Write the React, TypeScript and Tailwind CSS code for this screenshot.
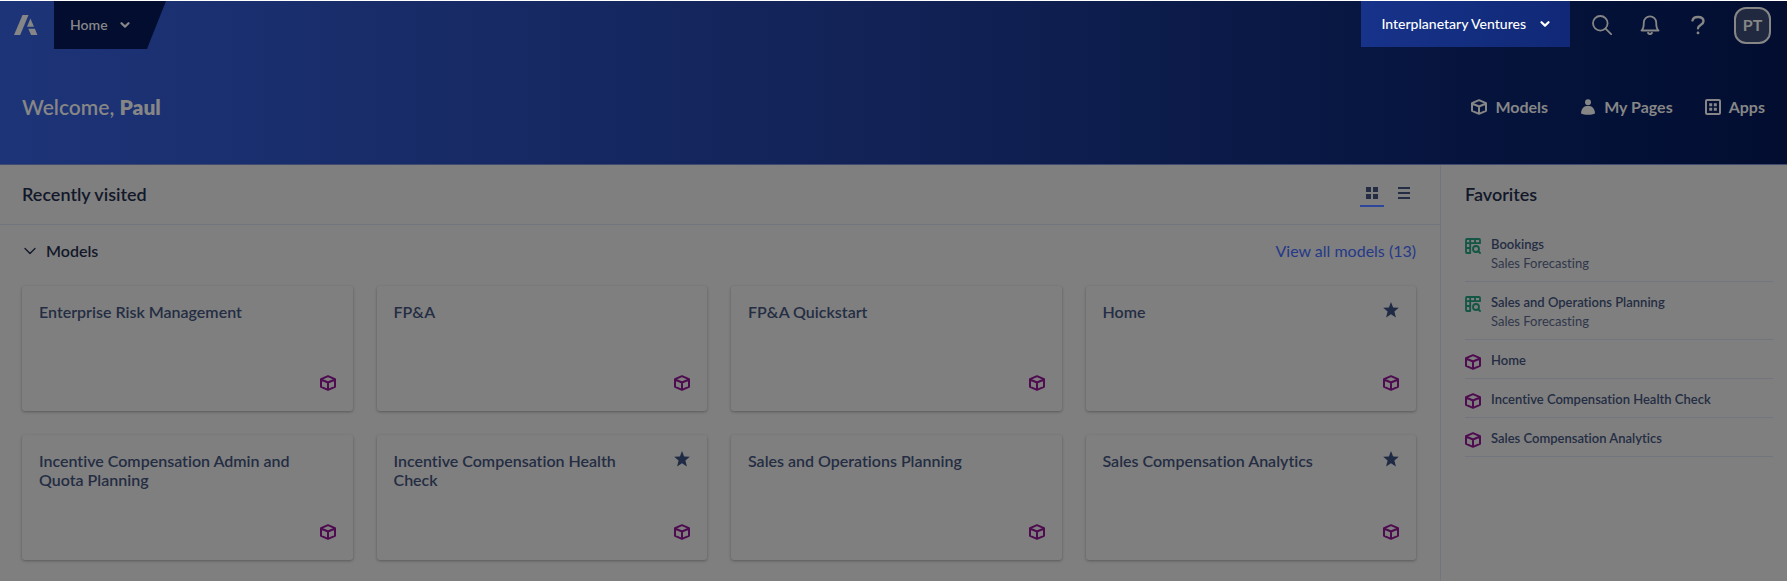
import type { ReactNode } from "react";

type IconProps = { className?: string };

const models = [
  { name: "Enterprise Risk Management", starred: false },
  { name: "FP&A", starred: false },
  { name: "FP&A Quickstart", starred: false },
  { name: "Home", starred: true },
  { name: "Incentive Compensation Admin and Quota Planning", starred: false },
  { name: "Incentive Compensation Health Check", starred: true },
  { name: "Sales and Operations Planning", starred: false },
  { name: "Sales Compensation Analytics", starred: true },
];

const favorites = [
  { name: "Bookings", app: "Sales Forecasting" },
  { name: "Sales and Operations Planning", app: "Sales Forecasting" },
  { name: "Home" },
  { name: "Incentive Compensation Health Check" },
  { name: "Sales Compensation Analytics" },
];

function Logo() {
  return (
    <svg className="w-6 h-5" viewBox="0 0 24 20" fill="currentColor" aria-hidden="true">
      <path d="M8.500 0h6L6.200 20H0z" />
      <path d="M16.400 3.500 20 11.800h-7z" />
      <path d="M14.300 13.700h6.600L23.400 20h-6.300z" />
    </svg>
  );
}

function Chevron({ className }: IconProps) {
  return (
    <svg className={className} viewBox="0 0 10 6" fill="none" stroke="currentColor" strokeWidth="2.200" strokeLinecap="round" strokeLinejoin="round" aria-hidden="true">
      <path d="M1.500 1.200 5 4.600l3.500-3.400" />
    </svg>
  );
}

function Cube({ className }: IconProps) {
  return (
    <svg className={className} viewBox="0 0 16 16" fill="none" stroke="currentColor" strokeWidth="2" strokeLinejoin="round" aria-hidden="true">
      <path d="M8 1.200 15 4.200v7.600l-7 3-7-3V4.200zM1 4.500l7 3 7-3M8 7.500V15" />
    </svg>
  );
}

function PageIcon({ className }: IconProps) {
  return (
    <svg className={className} viewBox="0 0 16 16" fill="none" stroke="currentColor" strokeWidth="1.800" strokeLinecap="round" strokeLinejoin="round" aria-hidden="true">
      <path d="M15 5.200V2a1 1 0 0 0-1-1H2a1 1 0 0 0-1 1v12a1 1 0 0 0 1 1h3.200V1M1 5.200h14M10 1v4.200M1 10h4.200" />
      <circle cx="11" cy="11" r="3" />
      <path d="m13.200 13.200 1.800 1.800" />
    </svg>
  );
}

function Star({ className }: IconProps) {
  return (
    <svg className={className} viewBox="0 0 16 16" fill="currentColor" aria-hidden="true">
      <path d="m8 0 2.100 5.500 5.700.3-4.400 3.700 1.500 5.900L8 12.200l-4.900 3.200 1.500-5.900L.2 5.800l5.700-.3z" />
    </svg>
  );
}

function NavLink({ icon, children }: { icon: ReactNode; children: ReactNode }) {
  return (
    <a href="#" className="flex items-center gap-2">
      {icon}
      {children}
    </a>
  );
}

function TopBar() {
  return (
    <div className="flex h-12">
      <a href="#" aria-label="Start page" className="flex w-[54px] items-center justify-center pr-0.5">
        <Logo />
      </a>
      <button className="flex w-28 items-center gap-3 bg-[#020d30] pl-4 text-sm font-semibold [clip-path:polygon(0_0,100%_0,83%_100%,0_100%)]">
        Home
        <Chevron className="w-2.5 h-1.5" />
      </button>

      <div className="ml-auto flex items-center pr-4">
        <button className="mr-[22px] flex h-[46px] items-center gap-3.5 self-start bg-gradient-to-r from-[#17338a] to-[#102876] px-5 text-sm font-medium text-white">
          Interplanetary Ventures
          <Chevron className="w-2.5 h-1.5" />
        </button>
        <div className="mr-[26px] flex items-center gap-7">
          <button aria-label="Search">
            <svg className="size-5" viewBox="0 0 20 20" fill="none" stroke="currentColor" strokeWidth="1.800" strokeLinecap="round">
              <circle cx="8.300" cy="8.300" r="7.300" />
              <path d="m13.800 13.800 5.500 5.500" />
            </svg>
          </button>
          <button aria-label="Notifications">
            <svg className="size-5" viewBox="0 0 20 20" fill="none" stroke="currentColor" strokeWidth="1.800" strokeLinecap="round" strokeLinejoin="round">
              <path d="M1.500 15.500h17c-2-1.500-2.300-3.500-2.300-8A6.200 6.200 0 0 0 3.800 7.500c0 4.500-.3 6.500-2.300 8z" />
              <path d="M8.200 18c.8 1.300 2.800 1.300 3.600 0" strokeWidth="2.200" />
            </svg>
          </button>
          <button aria-label="Help">
            <svg className="size-5" viewBox="0 0 20 20" fill="none" stroke="currentColor" strokeWidth="2.400" strokeLinecap="round" strokeLinejoin="round">
              <path d="M4.500 5.400C5 3.200 7.200 2 10 2c3.300 0 5.500 1.700 5.500 4.300 0 3.900-5.500 3.500-5.500 7" />
              <path d="M10 17.800v.1" strokeWidth="2.800" />
            </svg>
          </button>
        </div>
        <button className="size-[37px] rounded-xl border-2 border-current bg-[#202940] text-base font-bold">PT</button>
      </div>
    </div>
  );
}

function ModelCard({ name, starred }: { name: string; starred: boolean }) {
  return (
    <a href="#" className="flex h-[125px] flex-col justify-between rounded-[3px] px-[17px] pt-4 pb-5 shadow-[0_1px_3px_rgba(0,0,0,0.3)]">
      <div className="flex items-start justify-between gap-8">
        <h3 className="max-w-[270px] text-base/[19px] font-semibold text-[#242d43]">{name}</h3>
        {starred && <Star className="size-4 shrink-0 text-[#1f2a44]" />}
      </div>
      <Cube className="size-4 self-end text-[#4f0b4f]" />
    </a>
  );
}

export default function App() {
  return (
    <div className="flex min-h-screen flex-col bg-[#7f7f7f] font-['Lato',sans-serif] [font-variant-ligatures:none]">
      <header className="border-t border-b border-t-white border-b-[#3f4a6e] bg-gradient-to-r from-[#1d3478] via-[#122256] to-[#020d30] text-[#868686]">
        <TopBar />
        <div className="flex h-[115px] items-center justify-between px-[22px]">
          <h1 className="text-[21px] font-semibold">
            Welcome, <strong className="font-extrabold">Paul</strong>
          </h1>
          <nav className="flex gap-8 text-base font-bold">
            <NavLink icon={<Cube className="size-4" />}>Models</NavLink>
            <NavLink
              icon={
                <svg className="size-4" viewBox="0 0 16 16" fill="currentColor" aria-hidden="true">
                  <circle cx="8" cy="3.200" r="3" />
                  <path d="M1 14.500C1 10 4 7 6.300 7h3.400C12 7 15 10 15 14.500 12 16.300 4 16.300 1 14.500z" />
                </svg>
              }
            >
              My Pages
            </NavLink>
            <NavLink
              icon={
                <svg className="size-4" viewBox="0 0 16 16" fill="currentColor" aria-hidden="true">
                  <rect x="1" y="1" width="14" height="14" rx="1" fill="none" stroke="currentColor" strokeWidth="2" />
                  <path d="M4.200 4.200h3v3h-3zM8.800 4.200h3v3h-3zM4.200 8.800h3v3h-3zM8.800 8.800h3v3h-3z" />
                </svg>
              }
            >
              Apps
            </NavLink>
          </nav>
        </div>
      </header>

      <div className="flex grow">
        <main className="flex-1">
          <div className="flex h-[60px] items-center justify-between border-b border-[#72747e] pr-[30px] pl-[22px]">
            <h2 className="pb-0.5 text-lg font-semibold text-[#121829]">Recently visited</h2>
            <div className="flex text-[#242d43]">
              <button aria-label="Grid view" className="flex h-6 w-6 justify-center border-b-2 border-[#2c469c] pt-1">
                <svg className="size-3" viewBox="0 0 12 12" fill="currentColor">
                  <path d="M0 0h5v5H0zM7 0h5v5H7zM0 7h5v5H0zM7 7h5v5H7z" />
                </svg>
              </button>
              <button aria-label="List view" className="ml-3.5 flex pt-1">
                <svg className="size-3" viewBox="0 0 12 12" fill="currentColor">
                  <path d="M0 0h12v2H0zM0 5h12v2H0zM0 10h12v2H0z" />
                </svg>
              </button>
            </div>
          </div>

          <section className="pr-6 pl-[22px] pt-4">
            <div className="flex items-center justify-between text-base/5">
              <button className="flex items-center gap-2 font-semibold text-[#121829]">
                <svg className="size-4" viewBox="0 0 16 16" fill="none" stroke="currentColor" strokeWidth="1.300" strokeLinecap="round" strokeLinejoin="round" aria-hidden="true">
                  <path d="m3 5.500 5 5 5-5" />
                </svg>
                Models
              </button>
              <a href="#" className="text-[#25398a]">View all models (13)</a>
            </div>
            <div className="mt-[25px] grid grid-cols-4 gap-6">
              {models.map((model) => (
                <ModelCard key={model.name} {...model} />
              ))}
            </div>
          </section>
        </main>

        <aside className="w-[347px] border-l border-[#72747e] pr-3.5 pl-6">
          <h2 className="flex h-[59px] items-center pb-0.5 text-lg font-semibold text-[#121829]">Favorites</h2>
          <ul>
            {favorites.map((item) => (
              <li key={item.name} className="border-b border-[#72747e] pt-2.5 pb-2">
                <a href="#" className="flex gap-2.5">
                  {item.app ? (
                    <PageIcon className="mt-1 size-4 text-[#125643]" />
                  ) : (
                    <Cube className="mt-1 size-4 text-[#4f0b4f]" />
                  )}
                  <span className="text-[13px]">
                    <span className="block leading-5 font-semibold text-[#242d43]">{item.name}</span>
                    {item.app && <span className="block leading-[19px] text-[#30374a]">{item.app}</span>}
                  </span>
                </a>
              </li>
            ))}
          </ul>
        </aside>
      </div>
    </div>
  );
}
